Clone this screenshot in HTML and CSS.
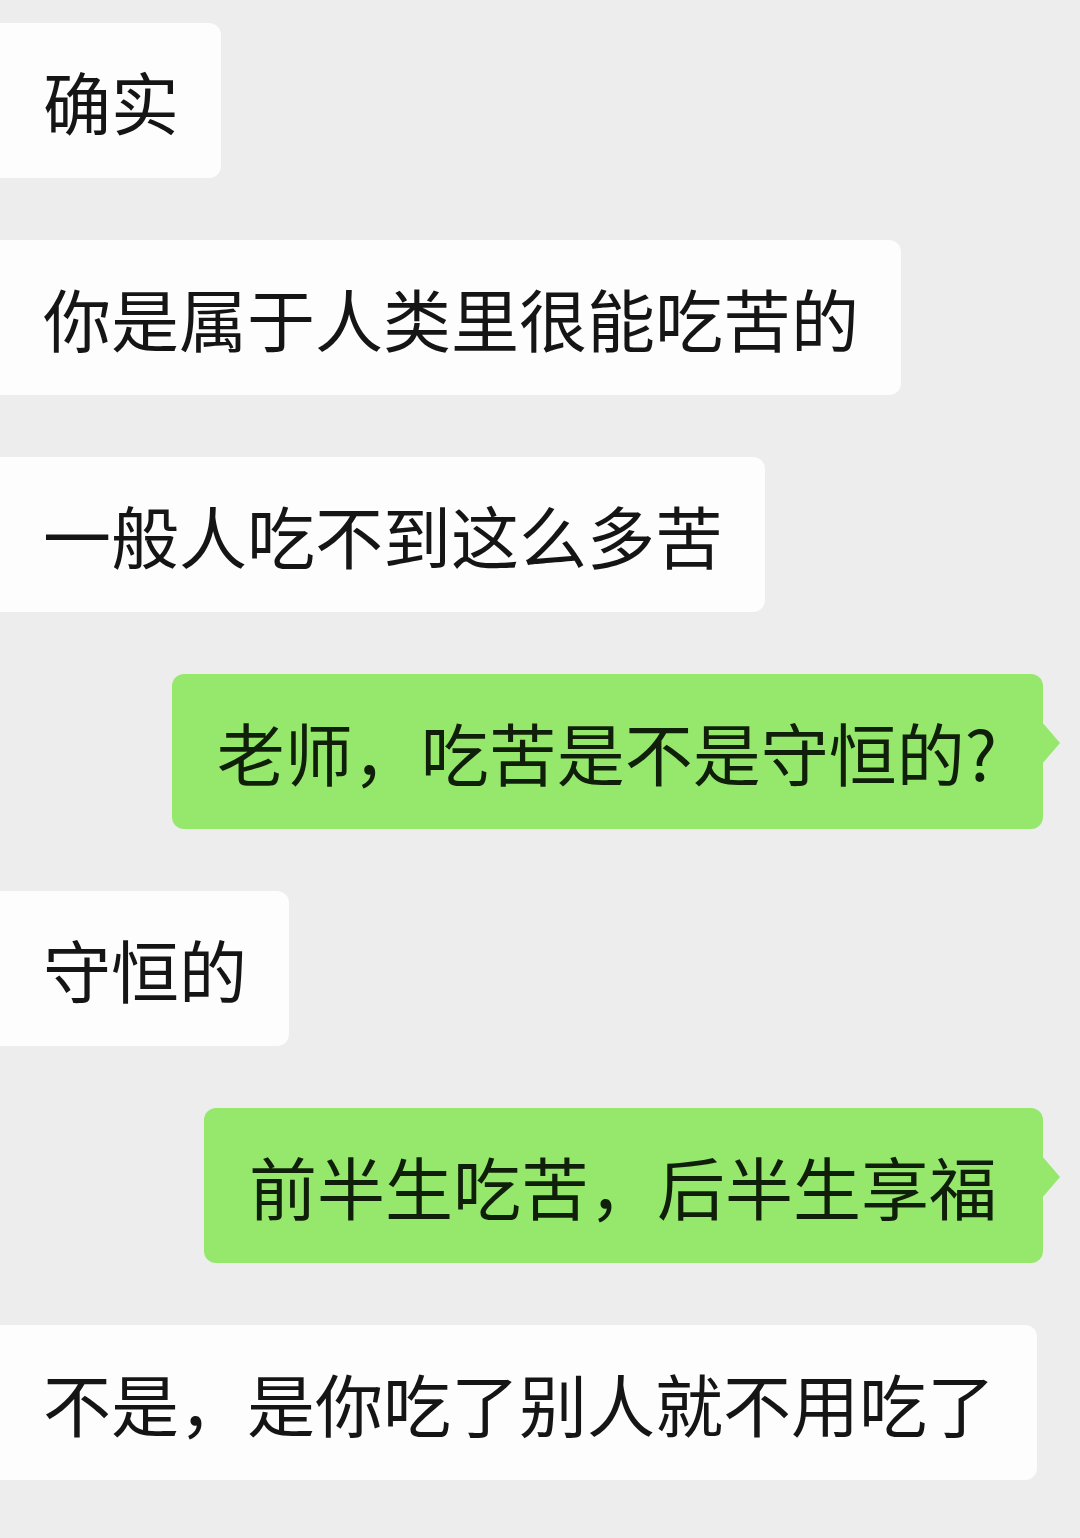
FILE: index.html
```html
<!DOCTYPE html>
<html>
    <head>
        <meta charset="utf-8"/>
        <link rel="stylesheet" href="styles.css">
    </head>
    <body>
        <main class="chat">
            <div class="bubble left">确实</div>
            <div class="bubble left">你是属于人类里很能吃苦的</div>
            <div class="bubble left">一般人吃不到这么多苦</div>
            <div class="bubble right">老师，吃苦是不是守恒的?</div>
            <div class="bubble left">守恒的</div>
            <div class="bubble right">前半生吃苦，后半生享福</div>
            <div class="bubble left">不是，是你吃了别人就不用吃了</div>
        </main>
    </body>
</html>
```

FILE: styles.css
```css
body {
    margin: 0;
    padding: 0;
    background: #ededed;
    font-family: "Noto Sans CJK SC", "Noto Sans", sans-serif;
}

.chat {
    display: flex;
    flex-direction: column;
    gap: 62px;
    padding-top: 23px;
}

.bubble {
    position: relative;
    font-size: 68px;
    line-height: 95px;
    color: #151515;
    padding: 30px 42px 30px 43px;
    white-space: nowrap;
}

.left {
    align-self: flex-start;
    background: #fdfdfd;
    border-radius: 0 12px 12px 0;
}

.right {
    align-self: flex-end;
    margin-right: 37px;
    padding: 30px 46px 30px 45px;
    background: #95e86b;
    color: #0f1f0a;
    border-radius: 12px;
}

/* little tail pointing to the avatar side */
.right::after {
    content: "";
    position: absolute;
    right: -17px;
    top: 48px;
    border-style: solid;
    border-width: 21px 0 21px 18px;
    border-color: transparent transparent transparent #95e86b;
}
```
